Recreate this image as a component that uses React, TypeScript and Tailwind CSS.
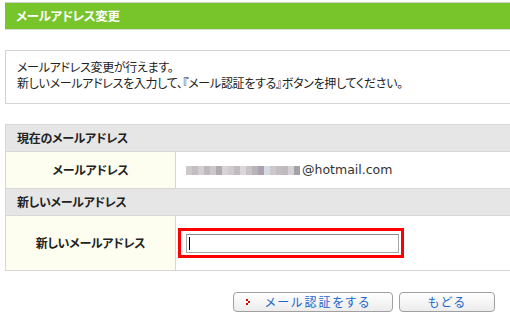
import React from "react";

const jp = "font-['Noto_Sans_CJK_JP','Noto_Sans',sans-serif] [font-feature-settings:'palt']";

function Blur() {
  const blocks = [
    "#c9c4c8", "#bdb8bc", "#cfcacd", "#b8b2b6", "#c6c1c5", "#a9a2a8", "#d3cfd2", "#cac5c9",
    "#bbb4ba", "#d6d2d5", "#c2bdc1", "#b2acb0", "#a597a6", "#cfd8e0", "#c8c3c7", "#bcb7bb",
    "#b9b3b8", "#d0ccd0", "#9c97a0",
  ];
  return (
    <span className="inline-flex h-[9px] opacity-90">
      {blocks.map((c, i) => (
        <span key={i} className="w-[6px] h-[9px] inline-block" style={{ background: c }} />
      ))}
    </span>
  );
}

export default function App() {
  return (
    <div className={`w-[510px] h-[328px] bg-white pl-[5px] pt-[2px] overflow-hidden text-[#222] ${jp}`}>
      <div className="h-[1px] bg-[#d0d0d0]" />
      <div className="h-[26px] bg-[#78c42b] flex items-center pl-[11px] text-white font-bold text-[12.5px] tracking-[-0.3px]">
        メールアドレス変更
      </div>
      <div className="h-[1px] bg-[#d8d8d8]" />

      <div className="mt-[20px] h-[54px] border-y border-l border-[#d4d4d4] pl-[11px] pt-[8px] text-[12px] leading-[16px] tracking-[-0.3px]">
        <div>メールアドレス変更が行えます。</div>
        <div>新しいメールアドレスを入力して、『メール認証をする』ボタンを押してください。</div>
      </div>

      <div className="mt-[20px] border-t border-l border-[#d6d6d6] text-[12px]">
        <div className="h-[27px] bg-[#e6e6e6] border-b border-[#d6d6d6] flex items-center pl-[11px] font-bold tracking-[-0.3px]">
          現在のメールアドレス
        </div>
        <div className="h-[37px] flex border-b border-[#d6d6d6]">
          <div className="w-[170px] bg-[#fefef0] border-r border-[#d6d6d6] flex items-center justify-center font-bold tracking-[-0.3px]">
            メールアドレス
          </div>
          <div className="flex-1 flex items-center pl-[10px]">
            <Blur />
            <span className="font-['DejaVu_Sans',sans-serif] text-[12.5px] text-[#333] ml-[2px] [font-feature-settings:normal]">@hotmail.com</span>
          </div>
        </div>
        <div className="h-[27px] bg-[#e6e6e6] border-b border-[#d6d6d6] flex items-center pl-[11px] font-bold tracking-[-0.3px]">
          新しいメールアドレス
        </div>
        <div className="h-[55px] flex border-b border-[#d6d6d6]">
          <div className="w-[170px] bg-[#fefef0] border-r border-[#d6d6d6] flex items-center justify-center font-bold tracking-[-0.3px]">
            新しいメールアドレス
          </div>
          <div className="flex-1 flex items-center pl-[2px]">
            <div className="w-[226px] h-[30px] border-[3px] border-[#ff0000] flex items-center pl-[5px]">
              <div className="w-[213px] h-[19px] border border-[#a8a8a8] border-t-[#8a8a8a] bg-white flex items-center pl-[2px]">
                <div className="w-[1px] h-[13px] bg-black" />
              </div>
            </div>
          </div>
        </div>
      </div>

      <div className="mt-[21px] flex justify-end pr-[15px] gap-[6px]">
        <button className="relative w-[160px] h-[20px] rounded-[4px] border border-[#a0a0a0] bg-gradient-to-b from-white to-[#ececec] text-[#1a66cc] text-[12px] tracking-[2px] flex items-center justify-center pl-[10px]">
          <svg className="absolute left-[12px] top-[6px]" width="4" height="6" viewBox="0 0 4 6">
            <rect x="0" y="0" width="2" height="2" fill="#e00000" />
            <rect x="2" y="2" width="2" height="2" fill="#e00000" />
            <rect x="0" y="4" width="2" height="2" fill="#e00000" />
          </svg>
          メール認証をする
        </button>
        <button className="w-[96px] h-[20px] rounded-[4px] border border-[#a0a0a0] bg-gradient-to-b from-white to-[#ececec] text-[#1a66cc] text-[12px] tracking-[2px] flex items-center justify-center">
          もどる
        </button>
      </div>
    </div>
  );
}
